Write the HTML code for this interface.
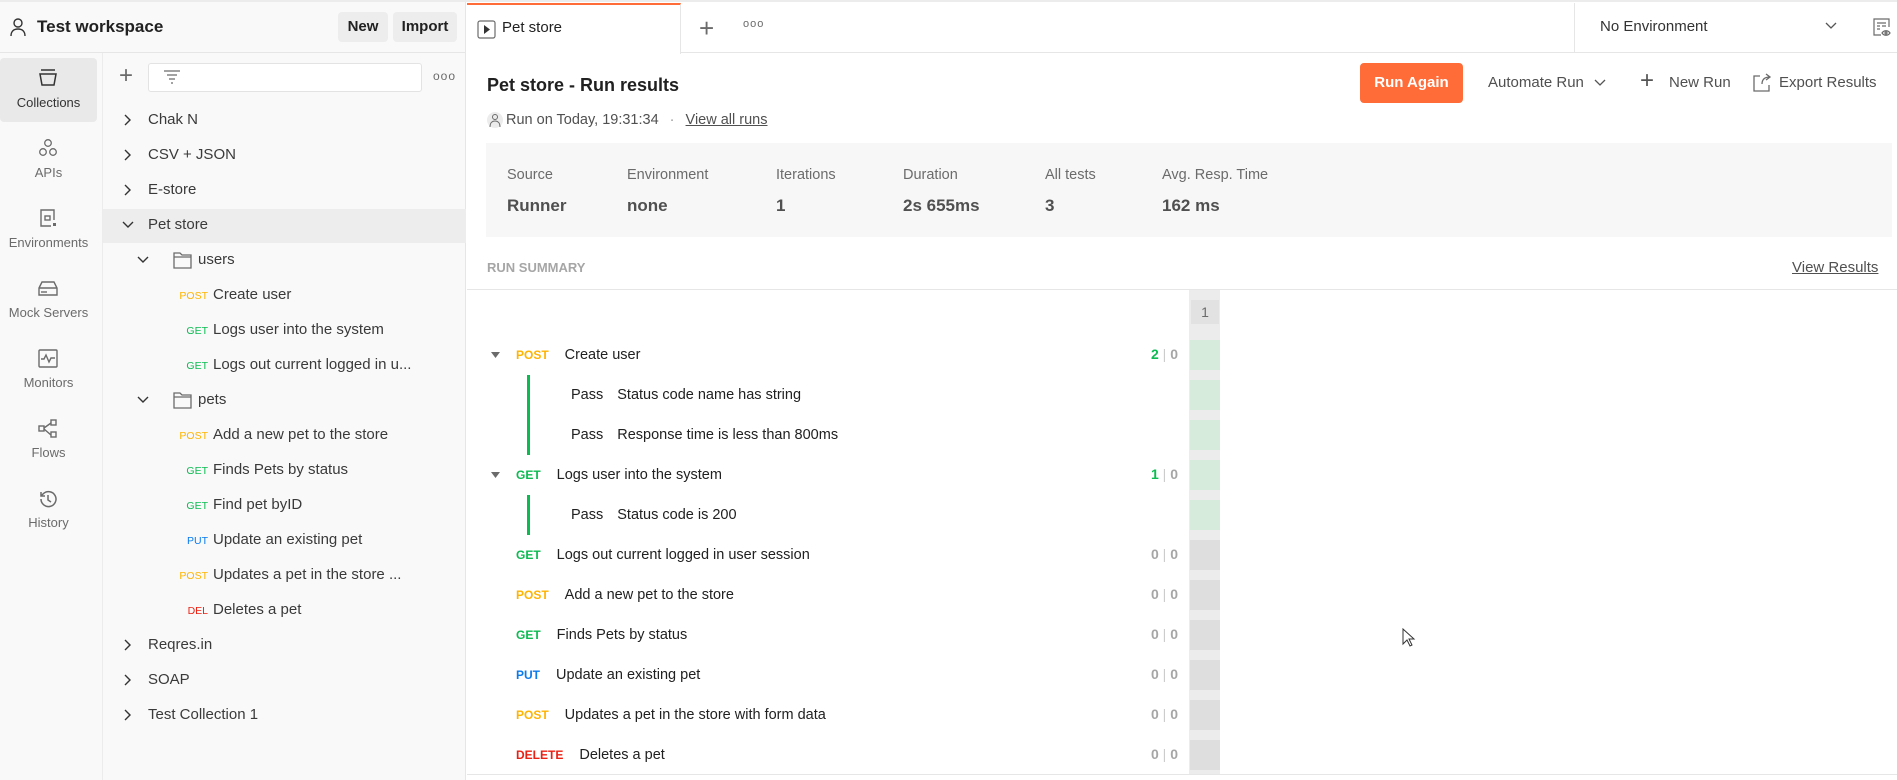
<!DOCTYPE html>
<html><head><meta charset="utf-8"><style>
*{box-sizing:border-box;margin:0;padding:0}
body{width:1897px;height:780px;overflow:hidden;background:#fff;font-family:"Liberation Sans",sans-serif;color:#212121;position:relative}
.a{position:absolute;white-space:nowrap}
.sb{position:absolute;left:0;top:2px;width:466px;height:778px;background:#f9f9f9;border-right:1px solid #e6e6e6}
.nav{position:absolute;left:0;top:53px;width:103px;height:727px;border-right:1px solid #ececec}
.nl{position:absolute;width:97px;text-align:center;font-size:13px;color:#6b6b6b}
.row{position:absolute;font-size:15px;color:#3a3a3a;line-height:20px}
.m{display:inline-block;font-size:10.5px;text-align:right;width:32px;margin-right:5px}
.po{color:#ffb400}.ge{color:#0cbb52}.pu{color:#097bed}.de{color:#eb2013}
.rr{position:absolute;font-size:14.5px;color:#212121;line-height:20px}
.rm{display:inline-block;font-size:12px;font-weight:bold;margin-right:10px}
.cnt{position:absolute;left:1140px;width:38px;text-align:right;font-size:14px;font-weight:bold;color:#a6a6a6}
.cell{position:absolute;left:1190px;width:30px;height:30px}
</style></head><body>
<div class="a" style="left:0;top:0;width:1897px;height:2px;background:#ececec"></div>
<div class="sb"></div>
<div class="a" style="left:0;top:52px;width:466px;height:1px;background:#e6e6e6"></div>
<svg class="a" style="left:8px;top:16px" width="20" height="22" viewBox="0 0 20 22"><circle cx="10" cy="7" r="4" fill="none" stroke="#333" stroke-width="1.4"/><path d="M3 20c0-5 3-7 7-7s7 2 7 7" fill="none" stroke="#333" stroke-width="1.4"/></svg>
<div class="a" style="left:37px;top:17px;font-size:17px;font-weight:bold;color:#212121">Test workspace</div>
<div class="a" style="left:338px;top:12px;width:50px;height:30px;background:#ededed;border-radius:4px;font-size:15px;font-weight:bold;text-align:center;line-height:30px">New</div>
<div class="a" style="left:393px;top:12px;width:64px;height:30px;background:#ededed;border-radius:4px;font-size:15px;font-weight:bold;text-align:center;line-height:30px">Import</div>
<div class="nav"></div>
<div class="a" style="left:0;top:58px;width:97px;height:64px;background:#e9e9e9;border-radius:4px"></div>
<svg class="a" style="left:37px;top:68px" width="22" height="20" viewBox="0 0 22 20"><path d="M4 2h14M3 6h16l-2 11H5z" fill="none" stroke="#333" stroke-width="1.5"/></svg>
<div class="nl" style="top:95px;color:#333">Collections</div>
<svg class="a" style="left:37px;top:138px" width="22" height="20" viewBox="0 0 22 20"><g fill="none" stroke="#6b6b6b" stroke-width="1.3"><circle cx="11" cy="5" r="3.3"/><circle cx="6" cy="14" r="3.3"/><circle cx="16" cy="14" r="3.3"/></g></svg>
<div class="nl" style="top:165px">APIs</div>
<svg class="a" style="left:37px;top:207px" width="22" height="22" viewBox="0 0 22 22"><g fill="none" stroke="#6b6b6b" stroke-width="1.4"><path d="M17 13V3H4v16h10"/><rect x="8" y="9" width="5" height="4"/></g><rect x="16" y="16" width="3" height="3" fill="#6b6b6b"/></svg>
<div class="nl" style="top:235px">Environments</div>
<svg class="a" style="left:37px;top:278px" width="22" height="20" viewBox="0 0 22 20"><g fill="none" stroke="#6b6b6b" stroke-width="1.4"><path d="M2 10l3-6h12l3 6v7H2z M2 10h18"/><path d="M5 13v2M7 13v2M9 13v2"/></g></svg>
<div class="nl" style="top:305px">Mock Servers</div>
<svg class="a" style="left:37px;top:348px" width="22" height="22" viewBox="0 0 22 22"><g fill="none" stroke="#6b6b6b" stroke-width="1.4"><rect x="2" y="2" width="18" height="17" rx="1"/><path d="M4 11h3l2-4 3 7 2-4h4"/></g></svg>
<div class="nl" style="top:375px">Monitors</div>
<svg class="a" style="left:37px;top:418px" width="22" height="22" viewBox="0 0 22 22"><g fill="none" stroke="#6b6b6b" stroke-width="1.4"><rect x="2" y="8" width="5" height="5"/><rect x="14" y="2" width="5" height="5"/><rect x="14" y="14" width="5" height="5"/><path d="M7 10l7-5M7 11l7 6"/></g></svg>
<div class="nl" style="top:445px">Flows</div>
<svg class="a" style="left:37px;top:488px" width="22" height="22" viewBox="0 0 22 22"><g fill="none" stroke="#6b6b6b" stroke-width="1.5"><path d="M4 11a7.5 7.5 0 1 0 2.5-5.5L4 8"/><path d="M4 4v4h4M11 7v5l3 2"/></g></svg>
<div class="nl" style="top:515px">History</div>
<div class="a" style="left:119px;top:63px;font-size:24px;color:#6b6b6b;font-weight:300;line-height:26px">+</div>
<div class="a" style="left:148px;top:63px;width:274px;height:29px;border:1px solid #e3e3e3;border-radius:3px;background:#fff"></div>
<svg class="a" style="left:162px;top:69px" width="20" height="16" viewBox="0 0 20 16"><path d="M2 2h16M5 6h10M7 10h6M9 14h2" stroke="#6b6b6b" stroke-width="1.2"/></svg>
<div class="a" style="left:433px;top:69px;font-size:12px;color:#6b6b6b;letter-spacing:1px">ooo</div>
<div class="a" style="left:103px;top:209px;width:363px;height:34px;background:#ededed"></div>
<svg class="a" style="left:122px;top:113px" width="12" height="14"><path d="M3 2l5 5-5 5" fill="none" stroke="#333" stroke-width="1.4"/></svg>
<div class="row" style="left:148px;top:110px">Chak N</div>
<svg class="a" style="left:122px;top:148px" width="12" height="14"><path d="M3 2l5 5-5 5" fill="none" stroke="#333" stroke-width="1.4"/></svg>
<div class="row" style="left:148px;top:145px">CSV + JSON</div>
<svg class="a" style="left:122px;top:183px" width="12" height="14"><path d="M3 2l5 5-5 5" fill="none" stroke="#333" stroke-width="1.4"/></svg>
<div class="row" style="left:148px;top:180px">E-store</div>
<svg class="a" style="left:121px;top:219px" width="14" height="12"><path d="M2 3l5 5 5-5" fill="none" stroke="#333" stroke-width="1.4"/></svg>
<div class="row" style="left:148px;top:215px">Pet store</div>
<svg class="a" style="left:136px;top:254px" width="14" height="12"><path d="M2 3l5 5 5-5" fill="none" stroke="#333" stroke-width="1.4"/></svg>
<svg class="a" style="left:173px;top:251px" width="20" height="18"><path d="M1 2h6l2 2h9v13H1z M1 6h17" fill="none" stroke="#6b6b6b" stroke-width="1.3"/></svg>
<div class="row" style="left:198px;top:250px">users</div>
<div class="row" style="left:176px;top:285px"><span class="m po">POST</span>Create user</div>
<div class="row" style="left:176px;top:320px"><span class="m ge">GET</span>Logs user into the system</div>
<div class="row" style="left:176px;top:355px"><span class="m ge">GET</span>Logs out current logged in u...</div>
<svg class="a" style="left:136px;top:394px" width="14" height="12"><path d="M2 3l5 5 5-5" fill="none" stroke="#333" stroke-width="1.4"/></svg>
<svg class="a" style="left:173px;top:391px" width="20" height="18"><path d="M1 2h6l2 2h9v13H1z M1 6h17" fill="none" stroke="#6b6b6b" stroke-width="1.3"/></svg>
<div class="row" style="left:198px;top:390px">pets</div>
<div class="row" style="left:176px;top:425px"><span class="m po">POST</span>Add a new pet to the store</div>
<div class="row" style="left:176px;top:460px"><span class="m ge">GET</span>Finds Pets by status</div>
<div class="row" style="left:176px;top:495px"><span class="m ge">GET</span>Find pet byID</div>
<div class="row" style="left:176px;top:530px"><span class="m pu">PUT</span>Update an existing pet</div>
<div class="row" style="left:176px;top:565px"><span class="m po">POST</span>Updates a pet in the store ...</div>
<div class="row" style="left:176px;top:600px"><span class="m de">DEL</span>Deletes a pet</div>
<svg class="a" style="left:122px;top:638px" width="12" height="14"><path d="M3 2l5 5-5 5" fill="none" stroke="#333" stroke-width="1.4"/></svg>
<div class="row" style="left:148px;top:635px">Reqres.in</div>
<svg class="a" style="left:122px;top:673px" width="12" height="14"><path d="M3 2l5 5-5 5" fill="none" stroke="#333" stroke-width="1.4"/></svg>
<div class="row" style="left:148px;top:670px">SOAP</div>
<svg class="a" style="left:122px;top:708px" width="12" height="14"><path d="M3 2l5 5-5 5" fill="none" stroke="#333" stroke-width="1.4"/></svg>
<div class="row" style="left:148px;top:705px">Test Collection 1</div>
<div class="a" style="left:467px;top:52px;width:1430px;height:1px;background:#e6e6e6"></div>
<div class="a" style="left:467px;top:3px;width:214px;height:51px;background:#fff;border-right:1px solid #e6e6e6;border-top:2px solid #ff6c37"></div>
<svg class="a" style="left:477px;top:20px" width="19" height="19"><rect x="1" y="1" width="17" height="17" rx="2" fill="none" stroke="#6b6b6b" stroke-width="1.2"/><path d="M7 5v9l6-4.5z" fill="#333"/></svg>
<div class="a" style="left:502px;top:19px;font-size:15px;color:#212121">Pet store</div>
<div class="a" style="left:699px;top:13px;font-size:26px;color:#6b6b6b;font-weight:300">+</div>
<div class="a" style="left:743px;top:18px;font-size:11px;color:#6b6b6b;letter-spacing:1px">ooo</div>
<div class="a" style="left:1574px;top:3px;width:1px;height:50px;background:#e6e6e6"></div>
<div class="a" style="left:1600px;top:18px;font-size:15px;color:#333">No Environment</div>
<svg class="a" style="left:1824px;top:21px" width="14" height="10"><path d="M2 2l5 5 5-5" fill="none" stroke="#555" stroke-width="1.3"/></svg>
<svg class="a" style="left:1872px;top:17px" width="20" height="20"><g fill="none" stroke="#6b6b6b" stroke-width="1.2"><path d="M9 18H2V2h15v8"/><path d="M5 6h9M5 9h3M10 9h4M5 12h3"/><path d="M10 16c2-3 6-3 8 0c-2 3-6 3-8 0z"/><circle cx="14" cy="16" r="1"/></g></svg>
<div class="a" style="left:487px;top:75px;font-size:18px;font-weight:bold;color:#212121">Pet store - Run results</div>
<div class="a" style="left:1360px;top:63px;width:103px;height:40px;background:#ff6c37;border-radius:4px;color:#fff;font-size:15px;font-weight:bold;text-align:center;line-height:40px">Run Again</div>
<div class="a" style="left:1488px;top:74px;font-size:15px;color:#505050">Automate Run</div>
<svg class="a" style="left:1594px;top:79px" width="12" height="9"><path d="M1 1l5 5 5-5" fill="none" stroke="#555" stroke-width="1.3"/></svg>
<div class="a" style="left:1640px;top:67px;font-size:24px;color:#555;font-weight:300">+</div>
<div class="a" style="left:1669px;top:74px;font-size:15px;color:#505050">New Run</div>
<svg class="a" style="left:1752px;top:73px" width="20" height="20"><path d="M8 3H2v15h15v-6M10 11c0-5 3-7 8-7M14 1l4 3-4 3" fill="none" stroke="#6b6b6b" stroke-width="1.3"/></svg>
<div class="a" style="left:1779px;top:74px;font-size:15px;color:#505050">Export Results</div>
<div class="a" style="left:487px;top:112px;width:16px;height:16px;border-radius:8px;background:#ececec"></div>
<svg class="a" style="left:489px;top:112px" width="12" height="16"><circle cx="6" cy="5" r="2.5" fill="none" stroke="#6b6b6b"/><path d="M1 15c0-4 2-6 5-6s5 2 5 6" fill="none" stroke="#6b6b6b"/></svg>
<div class="a" style="left:506px;top:112px;font-size:14.5px;color:#505050">Run on Today, 19:31:34 <span style="margin:0 7px;color:#999">·</span> <span style="text-decoration:underline">View all runs</span></div>
<div class="a" style="left:486px;top:143px;width:1406px;height:94px;background:#f7f7f7"></div>
<div class="a" style="left:507px;top:167px;font-size:14.5px;color:#6b6b6b">Source</div>
<div class="a" style="left:627px;top:167px;font-size:14.5px;color:#6b6b6b">Environment</div>
<div class="a" style="left:776px;top:167px;font-size:14.5px;color:#6b6b6b">Iterations</div>
<div class="a" style="left:903px;top:167px;font-size:14.5px;color:#6b6b6b">Duration</div>
<div class="a" style="left:1045px;top:167px;font-size:14.5px;color:#6b6b6b">All tests</div>
<div class="a" style="left:1162px;top:167px;font-size:14.5px;color:#6b6b6b">Avg. Resp. Time</div>
<div class="a" style="left:507px;top:196px;font-size:17px;font-weight:bold;color:#505050">Runner</div>
<div class="a" style="left:627px;top:196px;font-size:17px;font-weight:bold;color:#505050">none</div>
<div class="a" style="left:776px;top:196px;font-size:17px;font-weight:bold;color:#505050">1</div>
<div class="a" style="left:903px;top:196px;font-size:17px;font-weight:bold;color:#505050">2s 655ms</div>
<div class="a" style="left:1045px;top:196px;font-size:17px;font-weight:bold;color:#505050">3</div>
<div class="a" style="left:1162px;top:196px;font-size:17px;font-weight:bold;color:#505050">162 ms</div>
<div class="a" style="left:487px;top:260px;font-size:13px;font-weight:bold;color:#a6a6a6">RUN SUMMARY</div>
<div class="a" style="left:1792px;top:259px;font-size:15px;color:#505050;text-decoration:underline">View Results</div>
<div class="a" style="left:467px;top:289px;width:1430px;height:1px;background:#e6e6e6"></div>
<div class="a" style="left:467px;top:774px;width:1430px;height:1px;background:#e6e6e6"></div>
<div class="a" style="left:1189px;top:290px;width:1px;height:484px;background:#ececec"></div>
<div class="a" style="left:1190px;top:290px;width:30px;height:484px;background:#ececec"></div>
<div class="a" style="left:1191px;top:300px;width:28px;height:24px;background:#e2e2e2;font-size:14px;color:#6b6b6b;text-align:center;line-height:24px">1</div>
<div class="cell" style="top:340px;background:#d7ebdd"></div>
<div class="cell" style="top:380px;background:#d7ebdd"></div>
<div class="cell" style="top:420px;background:#d7ebdd"></div>
<div class="cell" style="top:460px;background:#d7ebdd"></div>
<div class="cell" style="top:500px;background:#d7ebdd"></div>
<div class="cell" style="top:540px;background:#dedede"></div>
<div class="cell" style="top:580px;background:#dedede"></div>
<div class="cell" style="top:620px;background:#dedede"></div>
<div class="cell" style="top:660px;background:#dedede"></div>
<div class="cell" style="top:700px;background:#dedede"></div>
<div class="cell" style="top:740px;background:#dedede"></div>
<svg class="a" style="left:490px;top:350px" width="12" height="10"><path d="M1 2h9l-4.5 6z" fill="#6b6b6b"/></svg>
<div class="rr" style="left:516px;top:345px"><span class="rm po" style="margin-right:16px">POST</span>Create user</div>
<div class="cnt" style="top:346px"><span style="color:#0cbb52">2</span> <span style="color:#ccc;font-weight:normal">|</span> 0</div>
<div class="a" style="left:527px;top:375px;width:3px;height:80px;background:#0cbb52"></div>
<div class="rr" style="left:571px;top:385px">Pass<span style="margin-left:14px">Status code name has string</span></div>
<div class="rr" style="left:571px;top:425px">Pass<span style="margin-left:14px">Response time is less than 800ms</span></div>
<svg class="a" style="left:490px;top:470px" width="12" height="10"><path d="M1 2h9l-4.5 6z" fill="#6b6b6b"/></svg>
<div class="rr" style="left:516px;top:465px"><span class="rm ge" style="margin-right:16px">GET</span>Logs user into the system</div>
<div class="cnt" style="top:466px"><span style="color:#0cbb52">1</span> <span style="color:#ccc;font-weight:normal">|</span> 0</div>
<div class="a" style="left:527px;top:495px;width:3px;height:40px;background:#0cbb52"></div>
<div class="rr" style="left:571px;top:505px">Pass<span style="margin-left:14px">Status code is 200</span></div>
<div class="rr" style="left:516px;top:545px"><span class="rm ge" style="margin-right:16px">GET</span>Logs out current logged in user session</div>
<div class="rr" style="left:516px;top:585px"><span class="rm po" style="margin-right:16px">POST</span>Add a new pet to the store</div>
<div class="rr" style="left:516px;top:625px"><span class="rm ge" style="margin-right:16px">GET</span>Finds Pets by status</div>
<div class="rr" style="left:516px;top:665px"><span class="rm pu" style="margin-right:16px">PUT</span>Update an existing pet</div>
<div class="rr" style="left:516px;top:705px"><span class="rm po" style="margin-right:16px">POST</span>Updates a pet in the store with form data</div>
<div class="rr" style="left:516px;top:745px"><span class="rm de" style="margin-right:16px">DELETE</span>Deletes a pet</div>
<div class="cnt" style="top:546px">0 <span style="color:#ccc;font-weight:normal">|</span> 0</div>
<div class="cnt" style="top:586px">0 <span style="color:#ccc;font-weight:normal">|</span> 0</div>
<div class="cnt" style="top:626px">0 <span style="color:#ccc;font-weight:normal">|</span> 0</div>
<div class="cnt" style="top:666px">0 <span style="color:#ccc;font-weight:normal">|</span> 0</div>
<div class="cnt" style="top:706px">0 <span style="color:#ccc;font-weight:normal">|</span> 0</div>
<div class="cnt" style="top:746px">0 <span style="color:#ccc;font-weight:normal">|</span> 0</div>
<svg class="a" style="left:1402px;top:628px" width="14" height="20"><path d="M1 1v15l4-4 3 6 2-1-3-6h5z" fill="#fff" stroke="#333"/></svg>
</body></html>
